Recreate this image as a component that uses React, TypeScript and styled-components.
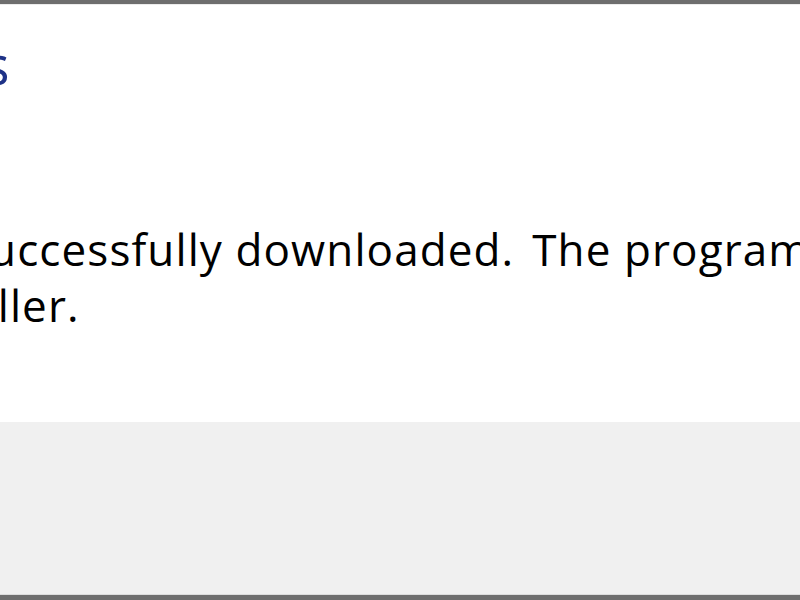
import React from "react";
import styled, { createGlobalStyle } from "styled-components";

const GlobalStyle = createGlobalStyle`
	html, body {
		margin: 0;
		padding: 0;
		background: #ffffff;
	}
	#root {
		width: 800px;
		height: 600px;
		overflow: hidden;
	}
`;

function App() {
	return (
		<>
			<GlobalStyle />
			<Window>
				<Content>
					<Heading $shift={-272}>Downloads</Heading>
					<Message>
						<Line $shift={-33}>{"successfully downloaded. \u200AThe program will now start"}</Line>
						<Line $shift={-107}>installer.</Line>
					</Message>
				</Content>
				<Footer />
			</Window>
		</>
	);
}

export default App;

const Window = styled.div`
	display: flex;
	flex-direction: column;
	width: 800px;
	height: 600px;
	box-sizing: border-box;
	border-top: 4px solid #6e6e6e;
	border-bottom: 5px solid #6e6e6e;
	overflow: hidden;
	font-family: "Open Sans", "Noto Sans", sans-serif;
`;

const Content = styled.div`
	display: flex;
	flex-direction: column;
	height: 418px;
	box-sizing: border-box;
	border-top: 1px solid #ececec;
	padding-top: 30px;
	background: #ffffff;
	overflow: hidden;
`;

const Heading = styled.div<{ $shift: number }>`
	margin-left: ${(p) => p.$shift}px;
	font-size: 54px;
	line-height: 58px;
	color: #1e3287;
	white-space: pre;
`;

const Message = styled.div`
	display: flex;
	flex-direction: column;
	margin-top: 128px;
`;

const Line = styled.div<{ $shift: number }>`
	margin-left: ${(p) => p.$shift}px;
	font-size: 44px;
	line-height: 56px;
	letter-spacing: 1.1px;
	color: #000000;
	white-space: pre;
`;

const Footer = styled.div`
	flex: 1;
	background: #f0f0f0;
	border-bottom: 1px solid #dcdcdc;
`;
